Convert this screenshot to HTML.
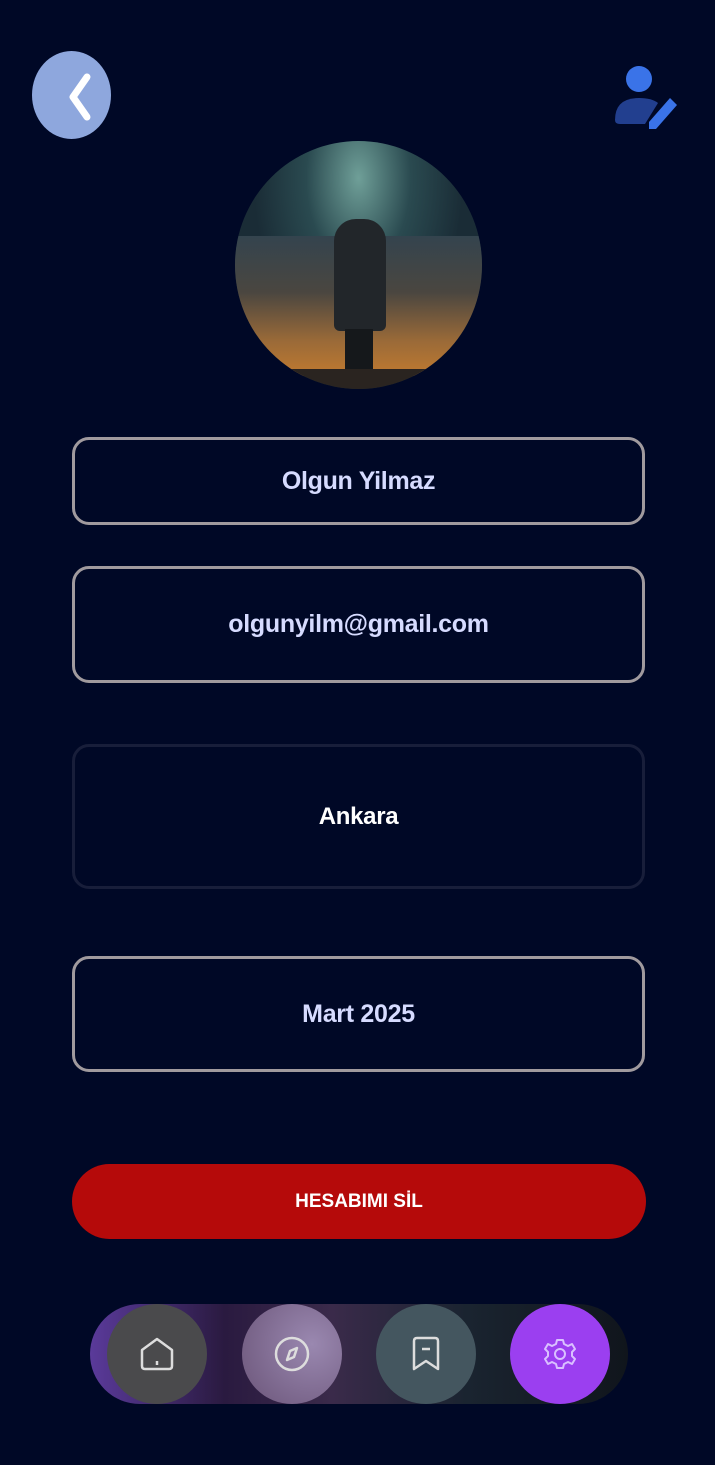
<!DOCTYPE html>
<html><head><meta charset="utf-8"><style>
*{margin:0;padding:0;box-sizing:border-box}
body{width:715px;height:1465px;background:#000826;position:relative;overflow:hidden;font-family:"Liberation Sans",sans-serif}
.f{position:absolute;left:72px;width:573px;border:3px solid #a09a9e;border-radius:17px;display:flex;align-items:center;justify-content:center;color:#d6dbff;font-weight:bold;font-size:25px;letter-spacing:-0.3px}
.c{position:absolute;width:100px;height:100px;border-radius:50%;top:1304px;display:flex;align-items:center;justify-content:center}
</style></head><body>
<div style="position:absolute;left:32px;top:51px;width:79px;height:88px;border-radius:50%;background:#8ea7dd"></div>
<svg style="position:absolute;left:32px;top:51px" width="79" height="88"><path d="M55 26 L41 46 L55 66" stroke="#fff" stroke-width="7" fill="none" stroke-linecap="round" stroke-linejoin="round"/></svg>
<svg style="position:absolute;left:612px;top:62px" width="70" height="70">
<circle cx="27" cy="17" r="13" fill="#3a73e8"/>
<path d="M3 58 Q3 36 27 36 Q40 36 46 41 L33 62 L8 62 Q3 62 3 58 Z" fill="#223f8f"/>
<path d="M58 36 L65 43 L44 67 L37 67 L37 60 Z" fill="#3a73e8"/>
</svg>
<div style="position:absolute;left:235px;top:141px;width:247px;height:248px;border-radius:50%;overflow:hidden;background:radial-gradient(ellipse at 50% 15%,#6f9f98 0%,#2a4a50 30%,#1a2c36 60%)">
<div style="position:absolute;left:0;top:95px;width:247px;height:140px;background:linear-gradient(#34444e,#4a4640 40%,#9a6a38 75%,#c07a30)"></div>
<div style="position:absolute;left:99px;top:78px;width:52px;height:112px;border-radius:22px 22px 6px 6px;background:#22262a"></div>
<div style="position:absolute;left:110px;top:188px;width:28px;height:45px;background:#15181b"></div>
<div style="position:absolute;left:0;top:228px;width:247px;height:22px;background:#2a2420"></div>
</div>
<div class="f" style="top:437px;height:88px">Olgun Yilmaz</div>
<div class="f" style="top:566px;height:117px">olgunyilm@gmail.com</div>
<div class="f" style="top:744px;height:145px;border-color:#181e3a;color:#fff;font-size:24px">Ankara</div>
<div class="f" style="top:956px;height:116px">Mart 2025</div>
<div style="position:absolute;left:72px;top:1164px;width:574px;height:75px;border-radius:38px;background:#b50a0a;color:#fff;font-weight:bold;font-size:19px;display:flex;align-items:center;justify-content:center">HESABIMI SİL</div>
<div style="position:absolute;left:90px;top:1304px;width:538px;height:100px;border-radius:50px;background:linear-gradient(90deg,#5a3a9a 0%,#2a1a40 25%,#3a2a4a 45%,#1a2430 70%,#10151c 100%)"></div>
<div class="c" style="left:107px;background:#4a4a4c"><svg width="40" height="40" viewBox="0 0 40 40" fill="none" stroke="#ddd" stroke-width="2.5" stroke-linejoin="round"><path d="M5 16 L20 5 L35 16 V32 Q35 35 32 35 H8 Q5 35 5 32 Z"/><path d="M20 27 V31"/></svg></div>
<div class="c" style="left:242px;background:radial-gradient(circle at 70% 40%,#9a88b0,#6a5478)"><svg width="40" height="40" viewBox="0 0 40 40" fill="none" stroke="#ddd" stroke-width="2.5"><circle cx="20" cy="20" r="16"/><path d="M25 14 L22 23 L15 26 L18 17 Z" stroke-linejoin="round"/></svg></div>
<div class="c" style="left:376px;background:#44565f"><svg width="40" height="40" viewBox="0 0 40 40" fill="none" stroke="#ddd" stroke-width="2.5" stroke-linejoin="round"><path d="M8 7 Q8 4 11 4 H29 Q32 4 32 7 V35 L20 27 L8 35 Z"/><path d="M16 15 H24"/></svg></div>
<div class="c" style="left:510px;background:#9b3ff0"><svg width="40" height="40" viewBox="0 0 40 40" fill="none" stroke="#d9c0ff" stroke-width="2"><circle cx="20" cy="20" r="5"/><path d="M17 6 H23 L24 10 L28 12 L32 10 L35 15 L32 18 V22 L35 25 L32 30 L28 28 L24 30 L23 34 H17 L16 30 L12 28 L8 30 L5 25 L8 22 V18 L5 15 L8 10 L12 12 L16 10 Z" stroke-linejoin="round"/></svg></div>
</body></html>
